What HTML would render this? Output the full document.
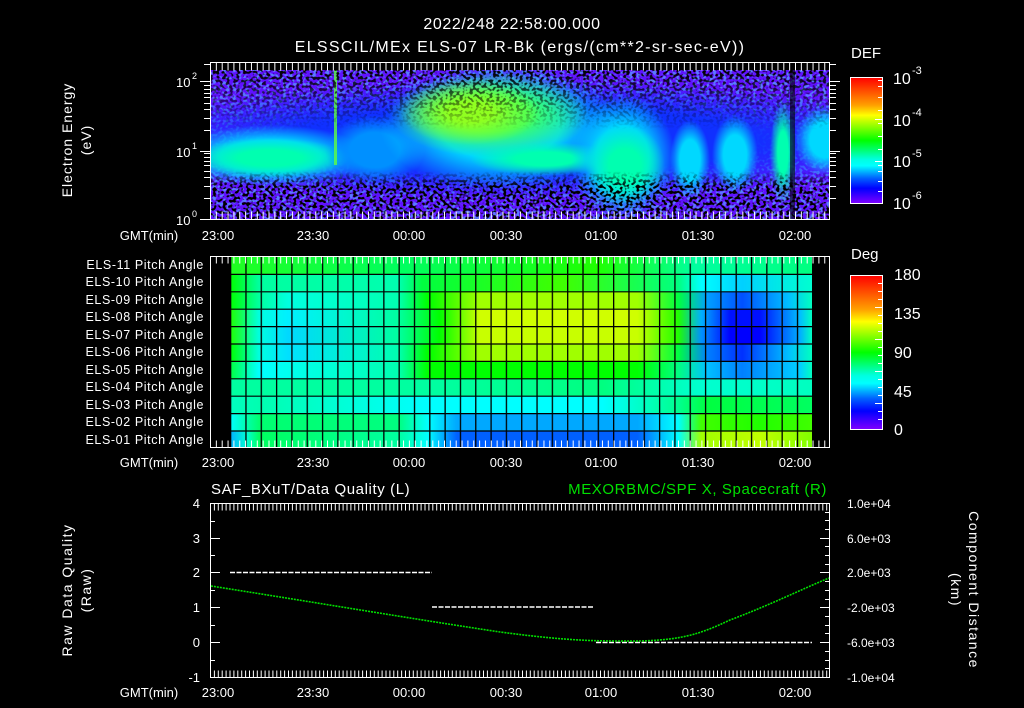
<!DOCTYPE html>
<html><head><meta charset="utf-8"><style>
html,body{margin:0;padding:0;background:#000;}
svg{display:block;}
text{font-family:"Liberation Sans",sans-serif;fill:#fff;}
</style></head><body>
<svg width="1024" height="708" viewBox="0 0 1024 708" xmlns="http://www.w3.org/2000/svg">
<defs>
<filter id="speck" filterUnits="userSpaceOnUse" x="210" y="70" width="620" height="150">
<feTurbulence type="fractalNoise" baseFrequency="0.3 0.35" numOctaves="1" seed="3"/>
<feColorMatrix type="matrix" values="0 0 0 0 0  0 0 0 0 0  0 0 0 0 0  9 0 0 0 -4.4"/>
</filter>
<filter id="speck2" filterUnits="userSpaceOnUse" x="210" y="70" width="620" height="150">
<feTurbulence type="fractalNoise" baseFrequency="0.3 0.35" numOctaves="1" seed="9"/>
<feColorMatrix type="matrix" values="0 0 0 0 0.1  0 0 0 0 0.2  0 0 0 0 1  8 0 0 0 -4"/>
</filter>
<radialGradient id="gB"><stop offset="0.55" stop-color="#1030ff"/><stop offset="1" stop-color="#1030ff" stop-opacity="0"/></radialGradient>
<radialGradient id="gC"><stop offset="0.5" stop-color="#00d8ff"/><stop offset="1" stop-color="#00d8ff" stop-opacity="0"/></radialGradient>
<radialGradient id="gCG"><stop offset="0.4" stop-color="#00ffb0"/><stop offset="1" stop-color="#00ffb0" stop-opacity="0"/></radialGradient>
<radialGradient id="gG"><stop offset="0.4" stop-color="#40ff60"/><stop offset="1" stop-color="#40ff60" stop-opacity="0"/></radialGradient>
<radialGradient id="gY"><stop offset="0.3" stop-color="#90ff20"/><stop offset="1" stop-color="#90ff20" stop-opacity="0"/></radialGradient>
<radialGradient id="gM"><stop offset="0.5" stop-color="#0090ff"/><stop offset="1" stop-color="#0090ff" stop-opacity="0"/></radialGradient>
<linearGradient id="vmask" x1="0" y1="70" x2="0" y2="219" gradientUnits="userSpaceOnUse">
<stop offset="0" stop-color="#fff"/><stop offset="0.25" stop-color="#fff" stop-opacity="0.4"/><stop offset="0.4" stop-color="#fff" stop-opacity="0"/><stop offset="0.68" stop-color="#fff" stop-opacity="0"/><stop offset="0.78" stop-color="#fff" stop-opacity="1"/><stop offset="1" stop-color="#fff"/>
</linearGradient>
<mask id="m1"><rect x="210" y="70" width="620" height="150" fill="url(#vmask)"/></mask>
<clipPath id="c1"><rect x="211" y="70" width="618" height="149"/></clipPath>
<linearGradient id="cb1" x1="0" y1="0" x2="0" y2="1">
<stop offset="0" stop-color="#ff0000"/><stop offset="0.22" stop-color="#ffa000"/><stop offset="0.3" stop-color="#ffff00"/><stop offset="0.5" stop-color="#00ff00"/><stop offset="0.65" stop-color="#00ffe0"/><stop offset="0.7" stop-color="#00ffff"/><stop offset="0.8" stop-color="#0060ff"/><stop offset="0.88" stop-color="#0000ff"/><stop offset="1" stop-color="#8000ff"/>
</linearGradient>
<pattern id="vg" x="230" y="0" width="15.32" height="10" patternUnits="userSpaceOnUse"><rect x="0" y="0" width="1.3" height="10" fill="#000"/></pattern>
<linearGradient id="r11" x1="230" x2="812" gradientUnits="userSpaceOnUse"><stop offset="0" stop-color="#20ff20"/><stop offset="0.3" stop-color="#00ff60"/><stop offset="0.63" stop-color="#20ff00"/><stop offset="0.8" stop-color="#00ffa0"/><stop offset="1" stop-color="#00ff80"/></linearGradient>
<linearGradient id="r10" x1="230" x2="812" gradientUnits="userSpaceOnUse"><stop offset="0" stop-color="#00ff00"/><stop offset="0.05" stop-color="#00ffa0"/><stop offset="0.29" stop-color="#00ffb0"/><stop offset="0.33" stop-color="#00ff40"/><stop offset="0.57" stop-color="#40ff00"/><stop offset="0.77" stop-color="#00ff80"/><stop offset="0.81" stop-color="#00ffff"/><stop offset="0.88" stop-color="#00d0ff"/><stop offset="1" stop-color="#00ffd0"/></linearGradient>
<linearGradient id="r9" x1="230" x2="812" gradientUnits="userSpaceOnUse"><stop offset="0" stop-color="#00ff00"/><stop offset="0.05" stop-color="#00ffa0"/><stop offset="0.1" stop-color="#00ffe0"/><stop offset="0.29" stop-color="#00ffb0"/><stop offset="0.34" stop-color="#00ff00"/><stop offset="0.43" stop-color="#a0ff00"/><stop offset="0.7" stop-color="#a0ff00"/><stop offset="0.77" stop-color="#00ff40"/><stop offset="0.82" stop-color="#00a0ff"/><stop offset="0.88" stop-color="#0050ff"/><stop offset="0.96" stop-color="#00c0ff"/><stop offset="1" stop-color="#00ffc0"/></linearGradient>
<linearGradient id="r8" x1="230" x2="812" gradientUnits="userSpaceOnUse"><stop offset="0" stop-color="#20ff00"/><stop offset="0.05" stop-color="#00ffe0"/><stop offset="0.1" stop-color="#00f0ff"/><stop offset="0.29" stop-color="#00ffa0"/><stop offset="0.36" stop-color="#00ff00"/><stop offset="0.43" stop-color="#d0ff00"/><stop offset="0.7" stop-color="#d0ff00"/><stop offset="0.77" stop-color="#20ff00"/><stop offset="0.81" stop-color="#00b0ff"/><stop offset="0.86" stop-color="#0010ff"/><stop offset="0.91" stop-color="#0010ff"/><stop offset="0.98" stop-color="#00c0ff"/><stop offset="1" stop-color="#00ffc0"/></linearGradient>
<linearGradient id="r7" x1="230" x2="812" gradientUnits="userSpaceOnUse"><stop offset="0" stop-color="#20ff00"/><stop offset="0.05" stop-color="#00ffe0"/><stop offset="0.1" stop-color="#00d8ff"/><stop offset="0.29" stop-color="#00ffa0"/><stop offset="0.36" stop-color="#00ff00"/><stop offset="0.43" stop-color="#c8ff00"/><stop offset="0.7" stop-color="#c8ff00"/><stop offset="0.77" stop-color="#20ff00"/><stop offset="0.81" stop-color="#0090ff"/><stop offset="0.86" stop-color="#0000ff"/><stop offset="0.91" stop-color="#0000ff"/><stop offset="0.98" stop-color="#00b0ff"/><stop offset="1" stop-color="#00ffc0"/></linearGradient>
<linearGradient id="r6" x1="230" x2="812" gradientUnits="userSpaceOnUse"><stop offset="0" stop-color="#00ff00"/><stop offset="0.05" stop-color="#00ffe0"/><stop offset="0.1" stop-color="#00e0ff"/><stop offset="0.29" stop-color="#00ffb0"/><stop offset="0.34" stop-color="#00ff00"/><stop offset="0.43" stop-color="#a0ff00"/><stop offset="0.7" stop-color="#a0ff00"/><stop offset="0.77" stop-color="#00ff40"/><stop offset="0.82" stop-color="#0080ff"/><stop offset="0.88" stop-color="#0030ff"/><stop offset="0.96" stop-color="#00c0ff"/><stop offset="1" stop-color="#00ffc0"/></linearGradient>
<linearGradient id="r5" x1="230" x2="812" gradientUnits="userSpaceOnUse"><stop offset="0" stop-color="#00ff40"/><stop offset="0.05" stop-color="#00ffff"/><stop offset="0.29" stop-color="#00ffb0"/><stop offset="0.34" stop-color="#00ff00"/><stop offset="0.7" stop-color="#00ff00"/><stop offset="0.77" stop-color="#00ff80"/><stop offset="0.82" stop-color="#00c0ff"/><stop offset="0.88" stop-color="#0080ff"/><stop offset="0.98" stop-color="#00d0ff"/><stop offset="1" stop-color="#00ffc0"/></linearGradient>
<linearGradient id="r4" x1="230" x2="812" gradientUnits="userSpaceOnUse"><stop offset="0" stop-color="#00ffa0"/><stop offset="0.36" stop-color="#00ffa0"/><stop offset="0.64" stop-color="#00ff80"/><stop offset="0.81" stop-color="#00ffd0"/><stop offset="1" stop-color="#00ffc0"/></linearGradient>
<linearGradient id="r3" x1="230" x2="812" gradientUnits="userSpaceOnUse"><stop offset="0" stop-color="#00ffc0"/><stop offset="0.05" stop-color="#00ffb0"/><stop offset="0.34" stop-color="#00ffff"/><stop offset="0.64" stop-color="#00ffff"/><stop offset="0.77" stop-color="#00ff90"/><stop offset="0.82" stop-color="#00ff40"/><stop offset="1" stop-color="#00ff60"/></linearGradient>
<linearGradient id="r2" x1="230" x2="812" gradientUnits="userSpaceOnUse"><stop offset="0" stop-color="#00ffff"/><stop offset="0.05" stop-color="#00ff70"/><stop offset="0.29" stop-color="#00ff80"/><stop offset="0.34" stop-color="#00ffff"/><stop offset="0.39" stop-color="#00a8ff"/><stop offset="0.7" stop-color="#00a8ff"/><stop offset="0.77" stop-color="#00ffff"/><stop offset="0.81" stop-color="#40ff00"/><stop offset="0.91" stop-color="#20ff00"/><stop offset="1" stop-color="#40ff00"/></linearGradient>
<linearGradient id="r1" x1="230" x2="812" gradientUnits="userSpaceOnUse"><stop offset="0" stop-color="#00b0ff"/><stop offset="0.03" stop-color="#00ffd0"/><stop offset="0.05" stop-color="#00ff60"/><stop offset="0.29" stop-color="#00ffa0"/><stop offset="0.34" stop-color="#00ffff"/><stop offset="0.39" stop-color="#0060ff"/><stop offset="0.7" stop-color="#0060ff"/><stop offset="0.77" stop-color="#00ffff"/><stop offset="0.81" stop-color="#a0ff00"/><stop offset="0.91" stop-color="#c0ff00"/><stop offset="1" stop-color="#80ff00"/></linearGradient>
</defs>

<text x="512" y="29" font-size="16" text-anchor="middle" letter-spacing="0.6">2022/248 22:58:00.000</text>
<text x="520" y="52" font-size="16" text-anchor="middle" letter-spacing="1.3">ELSSCIL/MEx ELS-07 LR-Bk  (ergs/(cm**2-sr-sec-eV))</text>

<!-- PANEL 1 -->
<g clip-path="url(#c1)">
<rect x="210" y="70" width="620" height="150" fill="#6010ff"/>
<rect x="210" y="70" width="620" height="150" filter="url(#speck2)"/>
<rect x="100" y="80" width="840" height="120" fill="url(#gB)"/>
<rect x="170" y="125" width="200" height="62" fill="url(#gC)"/>
<rect x="190" y="138" width="160" height="40" fill="url(#gCG)"/>
<rect x="325" y="115" width="100" height="70" fill="url(#gM)"/>
<rect x="380" y="65" width="240" height="125" fill="url(#gC)"/>
<rect x="390" y="72" width="200" height="85" fill="url(#gG)"/>
<rect x="400" y="80" width="140" height="65" fill="url(#gY)"/>
<rect x="470" y="142" width="150" height="34" fill="url(#gCG)"/>
<rect x="570" y="95" width="105" height="125" fill="url(#gC)"/>
<rect x="585" y="125" width="80" height="80" fill="url(#gCG)"/>
<rect x="670" y="120" width="40" height="80" fill="url(#gC)"/>
<rect x="712" y="115" width="46" height="80" fill="url(#gC)"/>
<rect x="770" y="100" width="26" height="105" fill="url(#gCG)"/>
<rect x="795" y="105" width="60" height="70" fill="url(#gC)"/>
<rect x="334" y="70" width="3" height="95" fill="#60ff40" opacity="0.8"/>
<rect x="790" y="70" width="5" height="150" fill="#000" opacity="0.6"/>
<rect x="210" y="70" width="620" height="150" filter="url(#speck)" mask="url(#m1)"/>
</g>
<g stroke="#fff" fill="none" stroke-width="1">
<rect x="210.5" y="62.5" width="619" height="157"/>
<line x1="210" y1="66.5" x2="830" y2="66.5" stroke-width="8" stroke-dasharray="1 4.85"/>
<line x1="210" y1="215.5" x2="830" y2="215.5" stroke-width="8" stroke-dasharray="1 4.85"/>
<path d="M200 219.5H210M200 151.5H210M200 81.5H210M204 198.5H210M204 186.5H210M204 177.5H210M204 171.5H210M204 165.5H210M204 161.5H210M204 157.5H210M204 153.5H210M204 130.5H210M204 118.5H210M204 109.5H210M204 103.5H210M204 97.5H210M204 93.5H210M204 89.5H210M204 85.5H210M204 64.5H210"/>
<path d="M830 151.5H840M830 81.5H840M830 198.5H836M830 186.5H836M830 177.5H836M830 171.5H836M830 165.5H836M830 161.5H836M830 157.5H836M830 153.5H836M830 130.5H836M830 118.5H836M830 109.5H836M830 103.5H836M830 97.5H836M830 93.5H836M830 89.5H836M830 85.5H836M830 64.5H836"/>
</g>
<text x="176" y="225" font-size="13">10</text><text x="192" y="217" font-size="9">0</text>
<text x="176" y="157" font-size="13">10</text><text x="192" y="149" font-size="9">1</text>
<text x="176" y="87" font-size="13">10</text><text x="192" y="79" font-size="9">2</text>
<text transform="translate(72,140) rotate(-90)" font-size="14" text-anchor="middle" letter-spacing="1">Electron Energy</text>
<text transform="translate(91,140) rotate(-90)" font-size="14" text-anchor="middle" letter-spacing="1">(eV)</text>
<g font-size="13" text-anchor="middle">
<text x="149" y="240">GMT(min)</text>
<text x="218" y="240">23:00</text><text x="313" y="240">23:30</text><text x="409" y="240">00:00</text><text x="506" y="240">00:30</text><text x="601" y="240">01:00</text><text x="698" y="240">01:30</text><text x="795" y="240">02:00</text>
</g>
<text x="851" y="58" font-size="15">DEF</text>
<rect x="850.5" y="77.5" width="32" height="126" fill="url(#cb1)" stroke="#fff"/>
<g stroke="#fff"><path d="M878 80.5H882M878 86.5H882M878 97.5H882M878 110.5H882M875 119.5H882M878 123.5H882M878 136.5H882M878 149.5H882M875 161.5H882M878 165.5H882M878 171.5H882M878 181.5H882M878 191.5H882"/></g>
<g font-size="16"><text x="893" y="84">10</text><text x="912" y="74" font-size="11">-3</text>
<text x="893" y="126">10</text><text x="912" y="116" font-size="11">-4</text>
<text x="893" y="167">10</text><text x="912" y="157" font-size="11">-5</text>
<text x="893" y="209">10</text><text x="912" y="199" font-size="11">-6</text></g>

<!-- PANEL 2 -->
<rect x="230" y="257" width="582" height="17.4" fill="url(#r11)"/>
<rect x="230" y="274.4" width="582" height="17.4" fill="url(#r10)"/>
<rect x="230" y="291.8" width="582" height="17.4" fill="url(#r9)"/>
<rect x="230" y="309.2" width="582" height="17.4" fill="url(#r8)"/>
<rect x="230" y="326.6" width="582" height="17.4" fill="url(#r7)"/>
<rect x="230" y="344" width="582" height="17.4" fill="url(#r6)"/>
<rect x="230" y="361.4" width="582" height="17.4" fill="url(#r5)"/>
<rect x="230" y="378.8" width="582" height="17.4" fill="url(#r4)"/>
<rect x="230" y="396.2" width="582" height="17.4" fill="url(#r3)"/>
<rect x="230" y="413.6" width="582" height="17.4" fill="url(#r2)"/>
<rect x="230" y="431" width="582" height="17" fill="url(#r1)"/>
<rect x="230" y="257" width="582" height="191" fill="url(#vg)"/>
<g stroke="#000" stroke-width="1.2"><path d="M230 274.4H812M230 291.8H812M230 309.2H812M230 326.6H812M230 344H812M230 361.4H812M230 378.8H812M230 396.2H812M230 413.6H812M230 431H812"/></g>
<g stroke="#fff" fill="none">
<rect x="210.5" y="256.5" width="619" height="191"/>
<line x1="210" y1="260" x2="830" y2="260" stroke-width="7" stroke-dasharray="1 4.85"/>
<line x1="210" y1="444" x2="830" y2="444" stroke-width="7" stroke-dasharray="1 4.85"/>
</g>
<g font-size="12.5" text-anchor="end" letter-spacing="0.6">
<text x="204" y="269">ELS-11 Pitch Angle</text>
<text x="204" y="286">ELS-10 Pitch Angle</text>
<text x="204" y="304">ELS-09 Pitch Angle</text>
<text x="204" y="321">ELS-08 Pitch Angle</text>
<text x="204" y="339">ELS-07 Pitch Angle</text>
<text x="204" y="356">ELS-06 Pitch Angle</text>
<text x="204" y="374">ELS-05 Pitch Angle</text>
<text x="204" y="391">ELS-04 Pitch Angle</text>
<text x="204" y="409">ELS-03 Pitch Angle</text>
<text x="204" y="426">ELS-02 Pitch Angle</text>
<text x="204" y="444">ELS-01 Pitch Angle</text>
</g>
<g font-size="13" text-anchor="middle">
<text x="149" y="467">GMT(min)</text>
<text x="218" y="467">23:00</text><text x="313" y="467">23:30</text><text x="409" y="467">00:00</text><text x="506" y="467">00:30</text><text x="601" y="467">01:00</text><text x="698" y="467">01:30</text><text x="795" y="467">02:00</text>
</g>
<text x="851" y="259" font-size="15">Deg</text>
<rect x="850.5" y="275.5" width="32" height="154" fill="url(#cb1)" stroke="#fff"/>
<g stroke="#fff"><path d="M878 283.5H882M878 291.5H882M878 299.5H882M875 307.5H882M878 315.5H882M878 323.5H882M878 331.5H882M875 339.5H882M878 347.5H882M878 355.5H882M878 363.5H882M875 371.5H882M878 379.5H882M878 387.5H882M878 395.5H882M875 403.5H882M878 411.5H882M878 419.5H882"/></g>
<g font-size="16"><text x="894" y="280">180</text><text x="894" y="319">135</text><text x="894" y="358">90</text><text x="894" y="397">45</text><text x="894" y="435">0</text></g>

<!-- PANEL 3 -->
<text x="211" y="494" font-size="15" letter-spacing="0.6">SAF_BXuT/Data Quality (L)</text>
<text x="827" y="494" font-size="15" text-anchor="end" letter-spacing="0.6" style="fill:#00e000">MEXORBMC/SPF X, Spacecraft (R)</text>
<g stroke="#fff" fill="none">
<rect x="210.5" y="503.5" width="619" height="174"/>
<line x1="210" y1="507" x2="830" y2="507" stroke-width="7" stroke-dasharray="1 2.9"/>
<line x1="210" y1="674" x2="830" y2="674" stroke-width="7" stroke-dasharray="1 2.9"/>
<path d="M210 538.5H220M210 572.5H220M210 607.5H220M210 642.5H220M210 521.5H215M210 555.5H215M210 590.5H215M210 625.5H215M210 660.5H215"/>
<path d="M830 538.5H820M830 572.5H820M830 607.5H820M830 642.5H820M830 512.5H825M830 520.5H825M830 529.5H825M830 546.5H825M830 555.5H825M830 564.5H825M830 581.5H825M830 590.5H825M830 599.5H825M830 616.5H825M830 625.5H825M830 633.5H825M830 651.5H825M830 660.5H825M830 668.5H825"/>
</g>
<g stroke="#fff" stroke-width="1.5" stroke-dasharray="5 1.5">
<line x1="230" y1="572.5" x2="432" y2="572.5"/>
<line x1="432" y1="607" x2="594" y2="607"/>
<line x1="596" y1="642.5" x2="812" y2="642.5"/>
</g>
<path d="M211 586 C300 600 420 620 500 632 C560 640 590 641 620 641 C680 642 700 634 730 620 C770 605 800 590 829 578" stroke="#00e000" stroke-width="1.6" fill="none" stroke-dasharray="2 1"/>
<g font-size="13" text-anchor="end">
<text x="200" y="508">4</text><text x="200" y="543">3</text><text x="200" y="577">2</text><text x="200" y="612">1</text><text x="200" y="647">0</text><text x="200" y="682">-1</text>
</g>
<g font-size="12">
<text x="847" y="508">1.0e+04</text><text x="847" y="543">6.0e+03</text><text x="847" y="577">2.0e+03</text><text x="847" y="612">-2.0e+03</text><text x="847" y="647">-6.0e+03</text><text x="847" y="682">-1.0e+04</text>
</g>
<text transform="translate(72,590) rotate(-90)" font-size="14" text-anchor="middle" letter-spacing="1.5">Raw Data Quality</text>
<text transform="translate(91,590) rotate(-90)" font-size="14" text-anchor="middle" letter-spacing="1.5">(Raw)</text>
<text transform="translate(969,590) rotate(90)" font-size="14" text-anchor="middle" letter-spacing="1.5">Component Distance</text>
<text transform="translate(951,590) rotate(90)" font-size="14" text-anchor="middle" letter-spacing="1.5">(km)</text>
<g font-size="13" text-anchor="middle">
<text x="149" y="697">GMT(min)</text>
<text x="218" y="697">23:00</text><text x="313" y="697">23:30</text><text x="409" y="697">00:00</text><text x="506" y="697">00:30</text><text x="601" y="697">01:00</text><text x="698" y="697">01:30</text><text x="795" y="697">02:00</text>
</g>
</svg>
</body></html>
